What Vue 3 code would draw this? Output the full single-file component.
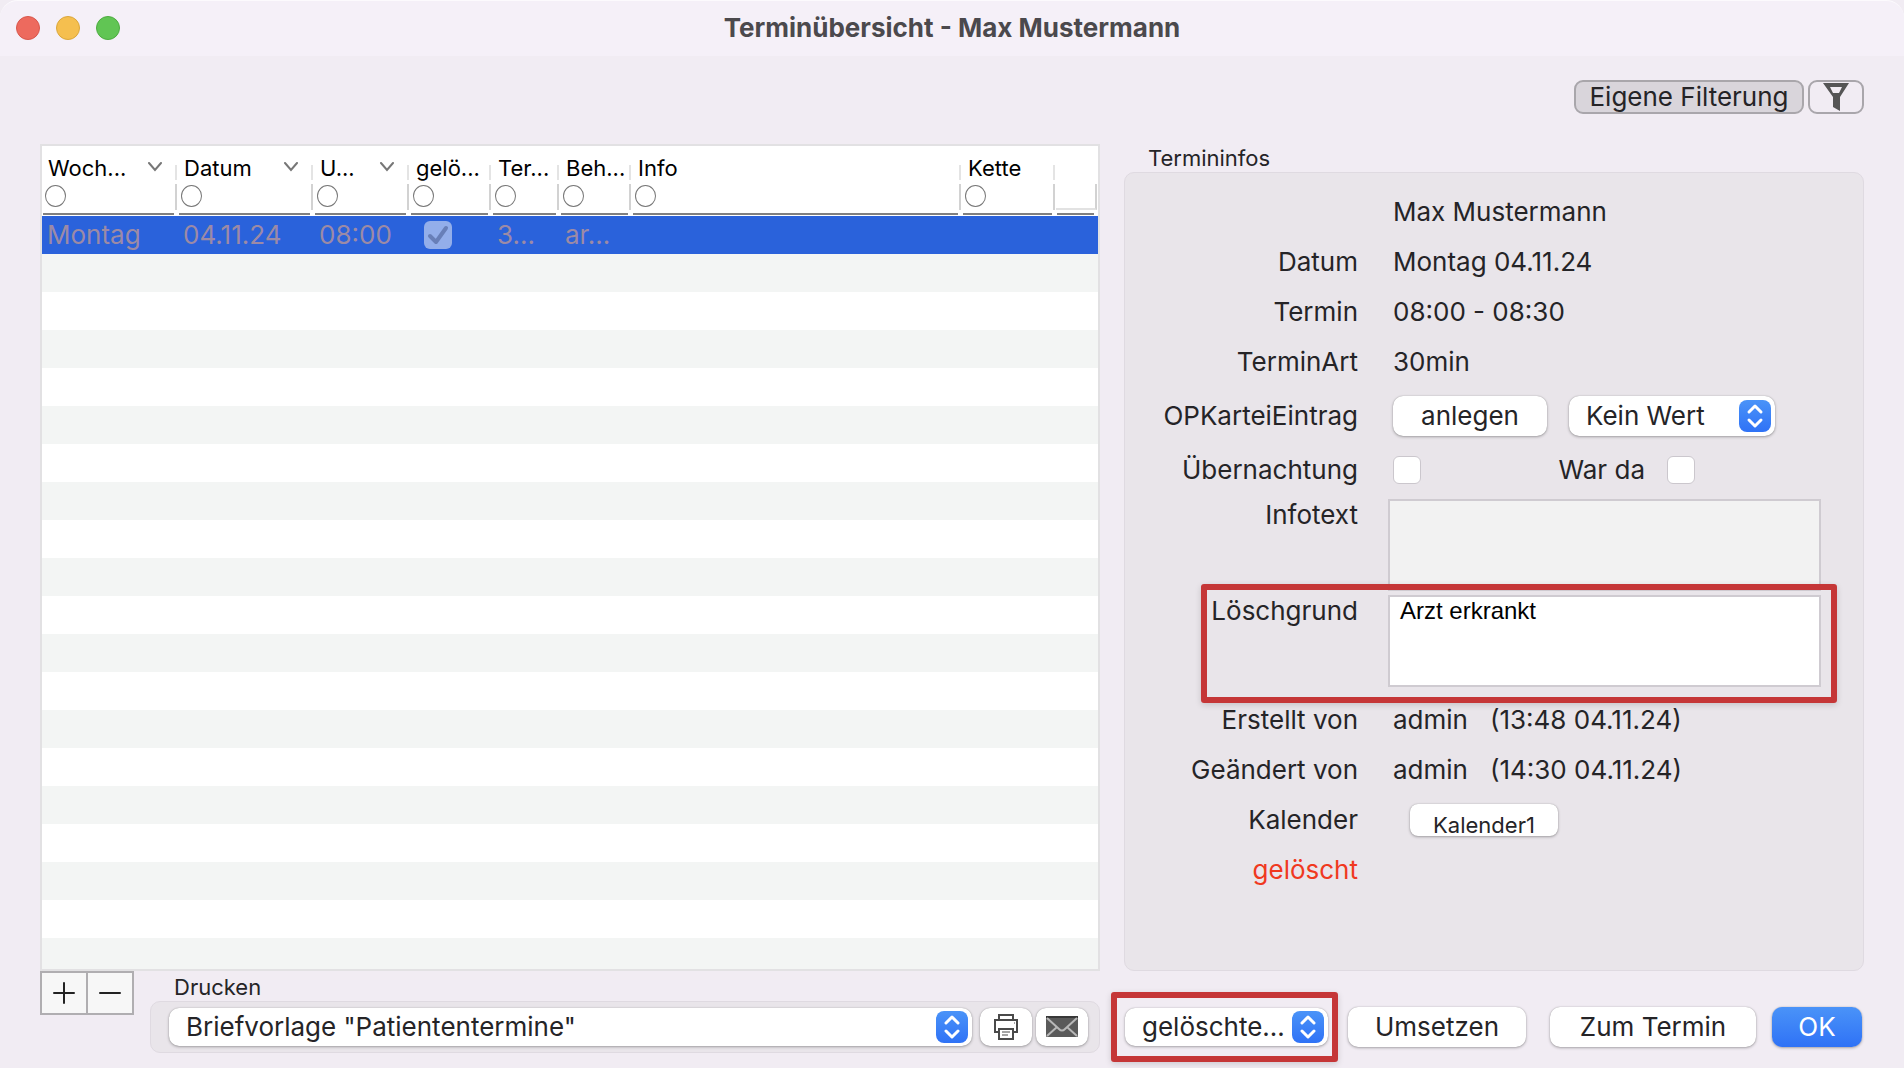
<script setup>
import { ref } from 'vue'

const columns = [
  { key: 'weekday', label: 'Woch...', width: 136, sortable: true },
  { key: 'date', label: 'Datum', width: 136, sortable: true },
  { key: 'time', label: 'U...', width: 96, sortable: true },
  { key: 'deleted', label: 'gelö...', width: 82 },
  { key: 'kind', label: 'Ter...', width: 68 },
  { key: 'doctor', label: 'Beh...', width: 72 },
  { key: 'info', label: 'Info' },
  { key: 'chain', label: 'Kette', width: 94 },
]

const rows = ref([
  { weekday: 'Montag', date: '04.11.24', time: '08:00', deleted: true, kind: '3...', doctor: 'ar...', info: '', chain: '' },
])

const template = ref('Briefvorlage "Patiententermine"')
const opEntry = ref('Kein Wert')
const view = ref('gelöschte...')
const overnight = ref(false)
const attended = ref(false)
const infoText = ref('')
const deleteReason = ref('Arzt erkrankt')
</script>

<template>
  <div class="window">
    <header class="titlebar">
      <div class="lights">
        <button class="light red" aria-label="Schließen"></button>
        <button class="light yellow" aria-label="Minimieren"></button>
        <button class="light green" aria-label="Vergrößern"></button>
      </div>
      <h1>Terminübersicht - Max Mustermann</h1>
    </header>

    <div class="toolbar">
      <button class="tool pressed">Eigene Filterung</button>
      <button class="tool funnel" aria-label="Filter">
        <svg width="26" height="28" viewBox="0 0 26 28">
          <path fill="#555" fill-rule="evenodd" d="M0 0H26L17 14V28L10 24V14ZM7 4L10 10H16L19 4Z" />
        </svg>
      </button>
    </div>

    <main class="columns">
      <section class="list">
        <table>
          <colgroup>
            <col v-for="c in columns" :key="c.key" :style="c.width ? { width: c.width + 'px' } : {}" />
            <col class="tail" />
          </colgroup>
          <thead>
            <tr>
              <th v-for="c in columns" :key="c.key">
                <div class="name">
                  <span>{{ c.label }}</span>
                  <svg v-if="c.sortable" width="16" height="10" viewBox="0 0 16 10">
                    <path d="M2 1L8 8L14 1" fill="none" stroke="#777" stroke-width="2" stroke-linecap="round" />
                  </svg>
                </div>
                <div class="filter">
                  <button class="dot" :aria-label="'Filter ' + c.label"></button>
                </div>
              </th>
              <th class="last">
                <div class="name end"></div>
                <div class="filter"></div>
              </th>
            </tr>
          </thead>
          <tbody>
            <tr v-for="r in rows" :key="r.date + r.time">
              <td v-for="c in columns" :key="c.key" :class="c.key">
                <input v-if="c.key === 'deleted'" type="checkbox" class="mark" v-model="r.deleted" aria-label="gelöscht" />
                <template v-else>{{ r[c.key] }}</template>
              </td>
              <td></td>
            </tr>
          </tbody>
        </table>
      </section>

      <section class="details">
        <h2>Termininfos</h2>
        <div class="panel">
          <div class="row">
            <span></span><span class="value">Max Mustermann</span>
          </div>
          <div class="row">
            <span class="label">Datum</span><span class="value">Montag 04.11.24</span>
          </div>
          <div class="row">
            <span class="label">Termin</span><span class="value">08:00 - 08:30</span>
          </div>
          <div class="row">
            <span class="label">TerminArt</span><span class="value">30min</span>
          </div>
          <div class="row tall">
            <label class="label" for="op">OPKarteiEintrag</label>
            <div class="value controls">
              <button class="push create">anlegen</button>
              <div class="popup op">
                <select id="op" v-model="opEntry"><option>Kein Wert</option></select>
                <svg class="stepper" viewBox="0 0 32 32"><path d="M10 12L16 6L22 12M10 20L16 26L22 20" /></svg>
              </div>
            </div>
          </div>
          <div class="row">
            <label class="label" for="night">Übernachtung</label>
            <div class="value checks">
              <input id="night" type="checkbox" class="check" v-model="overnight" />
              <label for="attended">War da</label>
              <input id="attended" type="checkbox" class="check" v-model="attended" />
            </div>
          </div>
          <div class="texts">
            <div class="row top">
              <label class="label" for="info">Infotext</label>
              <textarea id="info" class="readonly" readonly v-model="infoText"></textarea>
            </div>
            <div class="row top highlight reason">
              <label class="label" for="reason">Löschgrund</label>
              <textarea id="reason" v-model="deleteReason" spellcheck="false"></textarea>
            </div>
          </div>
          <div class="row">
            <span class="label">Erstellt von</span>
            <span class="value stamp"><span>admin</span><span>(13:48 04.11.24)</span></span>
          </div>
          <div class="row">
            <span class="label">Geändert von</span>
            <span class="value stamp"><span>admin</span><span>(14:30 04.11.24)</span></span>
          </div>
          <div class="row">
            <span class="label">Kalender</span>
            <div class="value"><button class="push calendar">Kalender1</button></div>
          </div>
          <div class="row">
            <span class="label deleted-note">gelöscht</span>
          </div>
        </div>
      </section>
    </main>

    <footer class="columns">
      <div class="left">
        <div class="plusminus">
          <button aria-label="Hinzufügen">
            <svg width="22" height="22" viewBox="0 0 22 22"><path d="M11 1V21M1 11H21" /></svg>
          </button>
          <button aria-label="Entfernen">
            <svg width="22" height="22" viewBox="0 0 22 22"><path d="M1 11H21" /></svg>
          </button>
        </div>
        <div class="print">
          <label for="template">Drucken</label>
          <div class="group">
            <div class="popup template">
              <select id="template" v-model="template"><option>Briefvorlage "Patiententermine"</option></select>
              <svg class="stepper" viewBox="0 0 32 32"><path d="M10 12L16 6L22 12M10 20L16 26L22 20" /></svg>
            </div>
            <button class="push icon" aria-label="Drucken">
              <svg width="24" height="26" viewBox="0 0 24 26" fill="none" stroke="#4a4a4a" stroke-width="2">
                <path d="M5 6V1H19V6M5 18H1V6H23V18H19M5 15H19V25H5Z" />
                <path d="M8 18H16M8 21H14M20 9H21" stroke-width="1" />
              </svg>
            </button>
            <button class="push icon" aria-label="E-Mail">
              <svg width="34" height="22" viewBox="0 0 34 22">
                <rect x="1" y="0" width="32" height="21" rx="1" fill="#5a5a5a" />
                <path d="M1 0H33V2H1Z" fill="#383838" />
                <path d="M2 2L14 13Q17 16 20 13L32 2M2 20L12 11M32 20L22 11" fill="none" stroke="#b8b8b8" stroke-width="2" />
              </svg>
            </button>
          </div>
        </div>
      </div>
      <div class="actions">
        <div class="popup view highlight">
          <select v-model="view" aria-label="Ansicht"><option>gelöschte...</option></select>
          <svg class="stepper" viewBox="0 0 32 32"><path d="M10 12L16 6L22 12M10 20L16 26L22 20" /></svg>
        </div>
        <button class="push move">Umsetzen</button>
        <button class="push goto">Zum Termin</button>
        <button class="push ok">OK</button>
      </div>
    </footer>
  </div>
</template>

<style>
body {
  background: #f1ecf3;
}
</style>

<style scoped>
* {
  box-sizing: border-box;
}
.window {
  min-height: 100vh;
  font: 26px/32px Inter, "Liberation Sans", sans-serif;
  color: #252427;
  background: #f1ecf3;
  padding-bottom: 16px;
}
button,
select,
input,
textarea {
  appearance: none;
  margin: 0;
  padding: 0;
  border: 0;
  font: inherit;
  color: inherit;
}
svg {
  display: block;
}
.titlebar {
  display: grid;
  grid-template-columns: 1fr auto 1fr;
  align-items: center;
  height: 56px;
  padding: 0 16px 2px;
  border-top: 1px solid #fcfafd;
  border-radius: 18px 18px 0 0;
  background: #f5f0f8;
}
.lights {
  display: flex;
  gap: 16px;
}
.light {
  width: 24px;
  height: 24px;
  border-radius: 50%;
}
.red {
  background: #ed6a5e;
  border: 1px solid #d8574c;
}
.yellow {
  background: #f5bf4f;
  border: 1px solid #dba73b;
}
.green {
  background: #61c554;
  border: 1px solid #4dac40;
}
h1 {
  margin: 0;
  font-size: 26px;
  font-weight: 700;
  color: #4b494d;
}
.toolbar {
  display: flex;
  justify-content: flex-end;
  gap: 4px;
  padding: 24px 40px 30px;
}
.tool {
  height: 34px;
  border: 2px solid #a9a6ab;
  border-radius: 9px;
  background: transparent;
}
.pressed {
  width: 230px;
  background: #d9d5db;
  line-height: 28px;
}
.funnel {
  display: flex;
  justify-content: center;
  align-items: center;
  width: 56px;
}
.columns {
  display: grid;
  grid-template-columns: minmax(0, 1060fr) minmax(0, 740fr);
  column-gap: 24px;
  padding: 0 40px;
}

/* Terminliste */
.list {
  border: 2px solid #e2e1e3;
  background: repeating-linear-gradient(#fff 0 38px, #f3f5f4 38px 76px) 0 70px;
  overflow: hidden;
}
table {
  width: 100%;
  table-layout: fixed;
  border-collapse: collapse;
}
.tail {
  width: 42px;
}
th {
  padding: 0;
  height: 70px;
  vertical-align: top;
  text-align: left;
  font-size: 22px;
  font-weight: 400;
  color: #000;
  background: linear-gradient(#808080, #808080) 1px 67px / calc(100% - 5px) 2px no-repeat #fff;
}
.name {
  display: flex;
  justify-content: space-between;
  height: 34px;
  padding: 6px 15px 0 6px;
  line-height: 32px;
  white-space: nowrap;
  background: linear-gradient(#e4e4e4, #e4e4e4) calc(100% - 1px) 100% / 2px 15px no-repeat;
}
.name svg {
  margin-top: 10px;
}
.name.end {
  background: none;
}
.filter {
  height: 26px;
  margin: 4px 1px 0 0;
  padding-top: 1px;
  border-right: 2px solid #d2d2d2;
}
.last .filter {
  border-bottom: 2px solid #e2e2e2;
}
.dot {
  display: block;
  width: 21px;
  height: 22px;
  margin-left: 3px;
  border: 1px solid #777;
  border-radius: 50%;
  background: #fff;
}
td {
  height: 38px;
  padding: 0 0 0 5px;
  color: #9c8aa6;
  background: #2a62db;
  white-space: nowrap;
}
.deleted {
  padding-left: 14px;
}
.mark {
  display: block;
  width: 28px;
  height: 28px;
  border-radius: 6px;
  background: #93aeea;
}
.mark:checked {
  background: #93aeea url("data:image/svg+xml,%3Csvg xmlns='http://www.w3.org/2000/svg' viewBox='0 0 28 28'%3E%3Cpath d='M6 15L12 21L22 7' fill='none' stroke='%23687fb8' stroke-width='4' stroke-linecap='round' stroke-linejoin='round'/%3E%3C/svg%3E");
}

/* Termininfos */
h2 {
  margin: 0 0 0 24px;
  font-size: 22px;
  line-height: 28px;
  font-weight: 400;
}
.panel {
  padding: 14px 42px 75px 0;
  border: 1px solid #dfdae1;
  border-radius: 10px;
  background: #e9e5ea;
}
.row {
  display: grid;
  grid-template-columns: 233px minmax(0, 1fr);
  column-gap: 30px;
  align-items: center;
  min-height: 50px;
}
.row.tall {
  min-height: 58px;
}
.row.top {
  align-items: start;
}
.label {
  text-align: right;
}
.value {
  padding-left: 5px;
}
.controls,
.checks,
.stamp {
  display: flex;
  align-items: center;
}
.controls {
  gap: 22px;
}
.stamp {
  gap: 22px;
}
.texts {
  display: grid;
  gap: 4px;
  padding: 4px 0 8px;
}
textarea {
  display: block;
  width: 100%;
  height: 92px;
  padding: 0 10px;
  border: 2px solid #cfcbd1;
  background: #fff;
  color: #000;
  font: 24px/28px "Liberation Sans", sans-serif;
  resize: none;
}
.readonly {
  background: #f2f2f2;
}
.deleted-note {
  color: #f0391f;
}
.highlight {
  position: relative;
}
.highlight::after {
  content: "";
  position: absolute;
  border: 6px solid #c53637;
  border-radius: 3px;
  box-shadow: 0 2px 6px rgba(0, 0, 0, 0.15);
  pointer-events: none;
}
.reason::after {
  inset: -11px -16px -16px 76px;
}
.view::after {
  inset: -16px -10px -16px -14px;
}

/* Bedienelemente */
.push,
.popup {
  border-radius: 10px;
  background: #fff;
  box-shadow: 0 0 1px rgba(0, 0, 0, 0.3), 0 1px 3px rgba(0, 0, 0, 0.3);
}
.push {
  height: 40px;
}
.create {
  width: 154px;
}
.calendar {
  display: block;
  width: 148px;
  height: 32px;
  margin-left: 17px;
  padding-top: 10px;
  border-radius: 8px;
  font-size: 22px;
  line-height: 22px;
}
.popup {
  display: flex;
  align-items: center;
  position: relative;
  height: 38px;
}
.popup select {
  width: 100%;
  height: 100%;
  padding: 0 40px 0 17px;
  border-radius: 10px;
  background: transparent;
}
.stepper {
  position: absolute;
  right: 4px;
  width: 32px;
  height: 32px;
  border-radius: 8px;
  background: linear-gradient(#4a93f8, #2f72f6);
  pointer-events: none;
}
.stepper path {
  fill: none;
  stroke: #fff;
  stroke-width: 3;
  stroke-linecap: round;
  stroke-linejoin: round;
}
.op {
  width: 206px;
  height: 40px;
}
.check {
  width: 28px;
  height: 28px;
  border: 1px solid #cbc7cd;
  border-radius: 6px;
  background: #fff;
}
.checks label {
  margin: 0 22px 0 auto;
}
.checks {
  width: 307px;
}

/* Fußleiste */
.left {
  display: flex;
  gap: 16px;
}
.plusminus {
  display: flex;
  width: 94px;
  height: 44px;
  border: 2px solid #b0aeb1;
}
.plusminus button {
  display: flex;
  flex: 1;
  justify-content: center;
  align-items: center;
  background: #f7f7f7;
}
.plusminus button + button {
  border-left: 2px solid #b0aeb1;
}
.plusminus path {
  stroke: #222;
  stroke-width: 2;
  stroke-linecap: round;
}
.print {
  flex: 1;
  padding-top: 2px;
}
.print label {
  display: block;
  margin-left: 24px;
  font-size: 22px;
  line-height: 28px;
}
.group {
  display: flex;
  align-items: center;
  height: 52px;
  padding: 0 11px 0 18px;
  border: 1px solid #dfdae1;
  border-radius: 10px;
  background: #e9e5ea;
}
.template {
  flex: 1;
  margin-right: 8px;
}
.icon {
  display: flex;
  justify-content: center;
  align-items: center;
  width: 52px;
  height: 38px;
}
.icon + .icon {
  margin-left: 4px;
}
.actions {
  display: flex;
  align-items: center;
  align-self: start;
  padding: 36px 2px 0 1px;
}
.view {
  flex: 1;
  margin-right: 20px;
}
.move {
  width: 178px;
  margin-right: 24px;
}
.goto {
  width: 206px;
  margin-right: 16px;
}
.ok {
  width: 90px;
  color: #fff;
  background: linear-gradient(#4a93f8, #2f72f6);
}
</style>
